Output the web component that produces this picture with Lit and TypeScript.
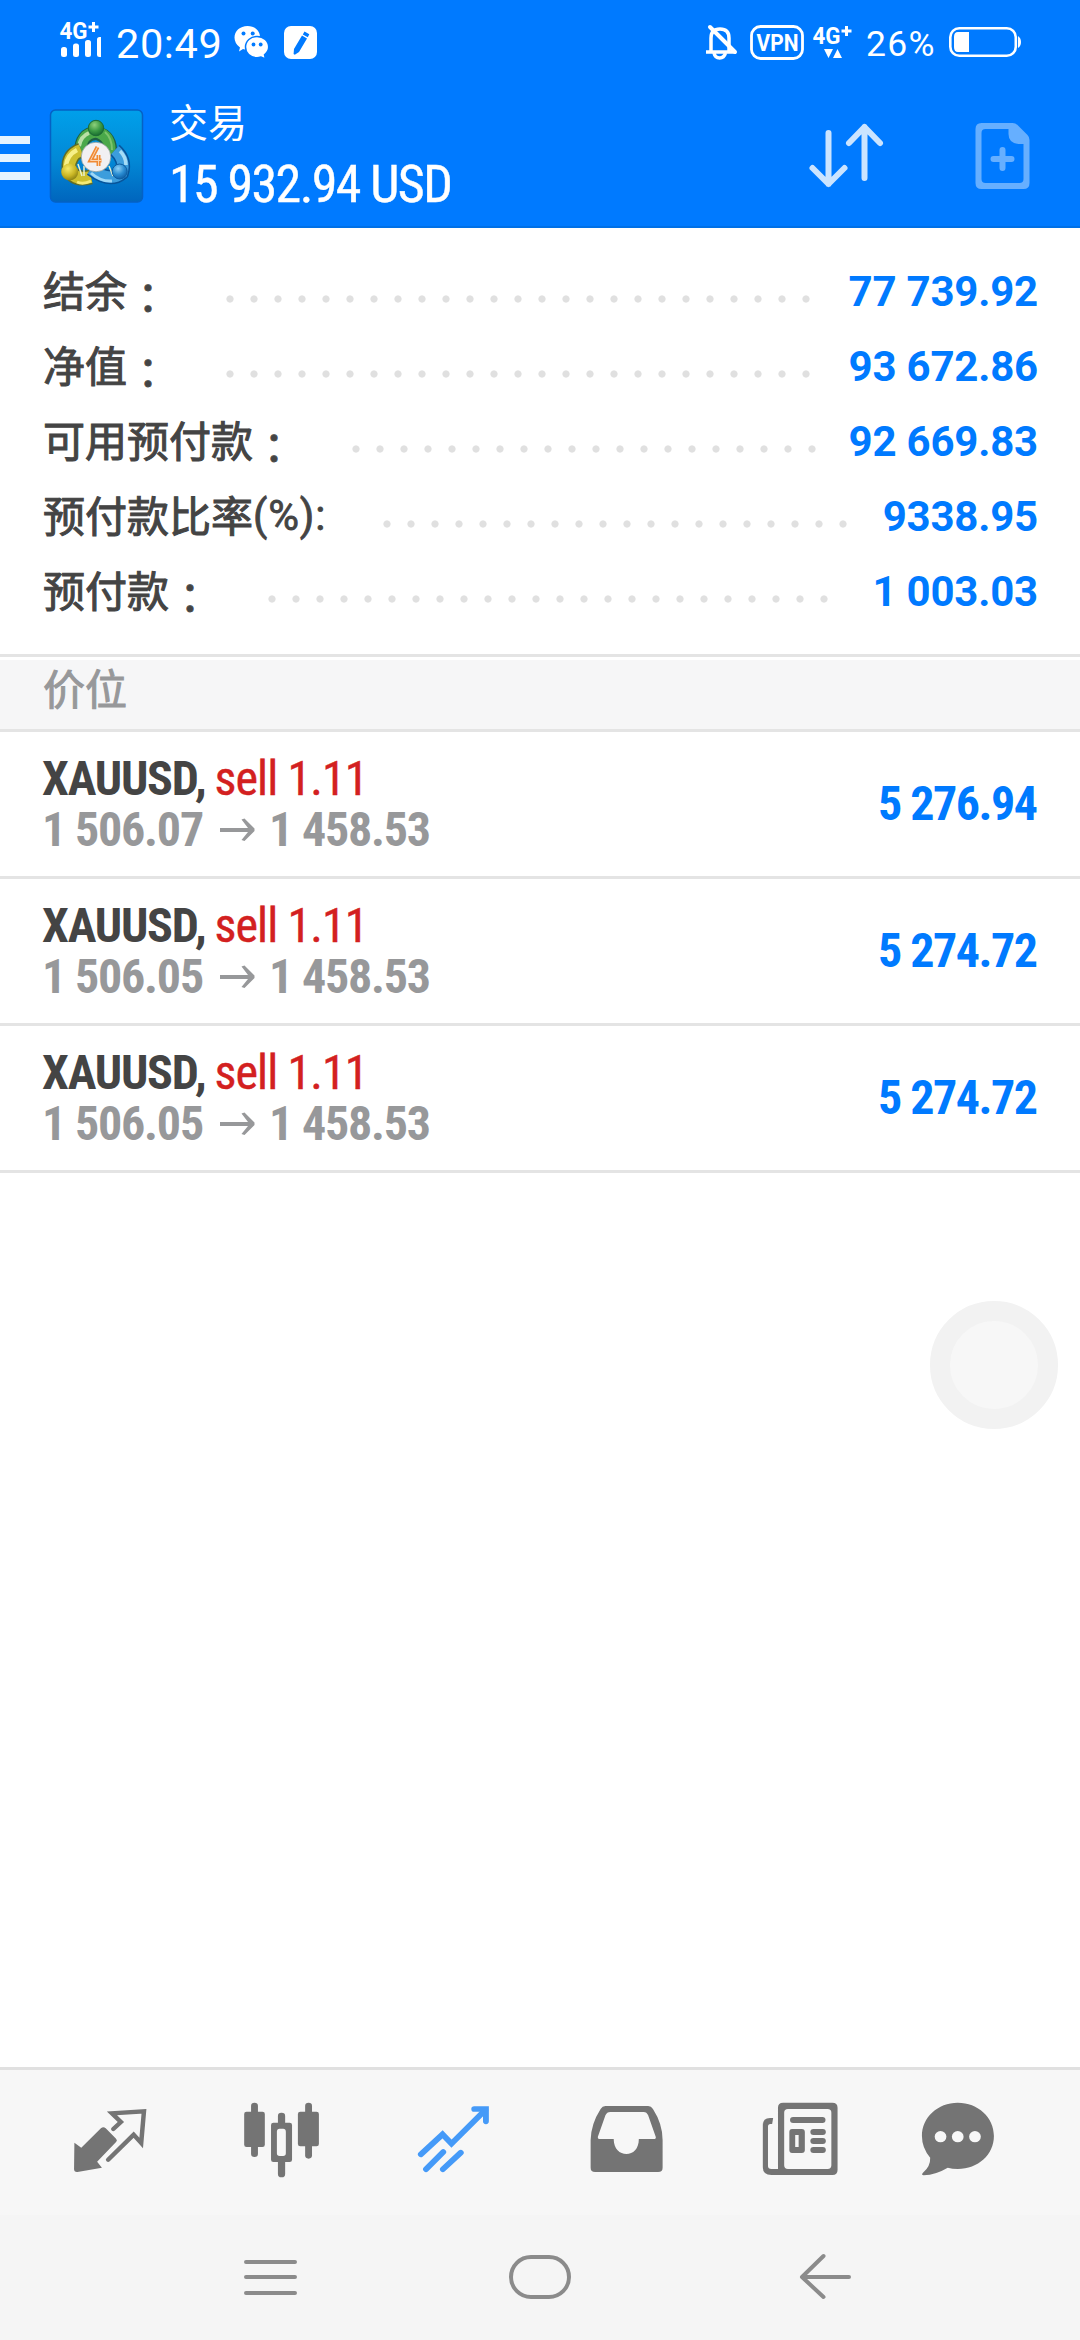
import { LitElement, html, css, svg } from "lit";
import { customElement, property } from "lit/decorators.js";

const summary = [
  { label: "结余", suffix: "：", value: "77 739.92" },
  { label: "净值", suffix: "：", value: "93 672.86" },
  { label: "可用预付款", suffix: "：", value: "92 669.83" },
  { label: "预付款比率", suffix: "(%):", value: "9338.95" },
  { label: "预付款", suffix: "：", value: "1 003.03" },
];

const positions = [
  { symbol: "XAUUSD,", side: "sell 1.11", open: "1 506.07", price: "1 458.53", profit: "5 276.94" },
  { symbol: "XAUUSD,", side: "sell 1.11", open: "1 506.05", price: "1 458.53", profit: "5 274.72" },
  { symbol: "XAUUSD,", side: "sell 1.11", open: "1 506.05", price: "1 458.53", profit: "5 274.72" },
];

// Tab glyphs are drawn on a fine grid; each tab shows its own slice of it.
const tabs = [
  {
    x: 24,
    art: svg`
      <path d="M216 278 L236 293 L293 235 Q300 228 307 235 L337 266 Q342 271 337 276 L282 335 L296 353 L225 366 Q215 367 215 357Z" fill="#747474"/>
      <path d="M329 237 L351 216 L325 190 L418 184 L410 279 L388 254 L314 329" fill="none" stroke="#747474" stroke-width="13" stroke-linecap="round"/>`,
  },
  {
    x: 196,
    art: svg`
      <g fill="#747474">
        <rect x="729" y="158" width="20" height="163" rx="10"/>
        <rect x="709" y="185" width="60" height="106" rx="7"/>
        <rect x="886" y="158" width="20" height="168" rx="10"/>
        <rect x="865" y="185" width="61" height="104" rx="7"/>
        <rect x="807" y="188" width="21" height="40" rx="10"/>
        <rect x="807" y="325" width="21" height="57" rx="10"/>
        <path fill-rule="evenodd" d="M794 218H841Q848 218 848 225V329Q848 336 841 336H794Q787 336 787 329V225Q787 218 794 218ZM812 236Q804 236 804 245V310Q804 318 812 318H822Q830 318 830 310V245Q830 236 822 236Z"/>
      </g>`,
  },
  {
    x: 368,
    art: svg`
      <g fill="none" stroke="#459af8" stroke-linecap="round" stroke-width="17">
        <path d="M1222 313 L1285 253 L1311 281 L1409 180"/>
        <path d="M1377 177 H1411 V214" stroke-linejoin="miter"/>
        <path d="M1237 358 L1287 306 M1286 358 L1338 308"/>
      </g>`,
  },
  {
    x: 540,
    art: svg`
      <path transform="translate(1568 0)" fill="#747474" fill-rule="evenodd" d="M190 168 H314 Q323 168 328 177 Q356 222 356 270 V353 Q356 366 343 366 H160 Q147 366 147 353 V270 Q148 222 176 177 Q181 168 190 168ZM204 186 Q194 186 190 196 L168 260 Q167 267 174 267 H214 C214 297 232 312 251 312 C270 312 287 297 287 267 H330 Q338 267 336 260 L314 196 Q310 186 301 186Z"/>`,
  },
  {
    x: 712,
    art: svg`
      <g transform="translate(1568 0)" fill="#747474">
        <path fill-rule="evenodd" d="M706 158H849Q864 158 864 173V360Q864 375 849 375H672Q647 375 647 352V226Q647 204 668 204H677L674 222H669Q662 222 662 230V348Q662 357 672 357H691V173Q691 158 706 158ZM720 177Q709 177 709 188V346Q709 357 720 357H835Q846 357 846 346V188Q846 177 835 177Z"/>
        <rect x="726" y="201" width="103" height="18" rx="9"/>
        <path fill-rule="evenodd" d="M732 237H760Q769 237 769 246V300Q769 309 760 309H732Q724 309 724 300V246Q724 237 732 237ZM741 255V291H751V255Z"/>
        <rect x="785" y="237" width="45" height="18" rx="9"/>
        <rect x="785" y="264" width="45" height="18" rx="9"/>
        <rect x="785" y="291" width="45" height="18" rx="9"/>
      </g>`,
  },
  {
    x: 884,
    art: svg`
      <g transform="translate(1568 0)">
        <path fill="#747474" d="M1213 158 C1272 158 1318 202 1318 258 C1318 314 1272 357 1213 357 Q1197 357 1184 353 Q1150 374 1114 376 Q1106 374 1112 368 Q1134 349 1133 323 Q1109 294 1109 258 C1109 202 1155 158 1213 158Z"/>
        <g fill="#f8f8f8"><circle cx="1163" cy="260" r="17"/><circle cx="1213" cy="260" r="17"/><circle cx="1263" cy="260" r="17"/></g>
      </g>`,
  },
];

@customElement("status-bar")
class StatusBar extends LitElement {
  static styles = css`
    :host { display: flex; height: 84px; color: #fff; font-family: Roboto, sans-serif; }
    svg { display: block; flex: none; }
    .left, .right { display: flex; }
    .left { padding-left: 58px; }
    .right { margin-left: auto; padding-right: 57px; }
    .time { font-size: 41.5px; line-height: 48px; margin-top: 20px; padding-left: 15px; width: 105px; letter-spacing: 0.6px; white-space: nowrap; }
    .pct { font-size: 35.5px; line-height: 40px; margin-top: 24px; letter-spacing: 1.3px; width: 83px; white-space: nowrap; }
    .net { font: 700 23px Roboto, sans-serif; }
    .vpn { font: 700 23px Roboto, sans-serif; }
  `;
  render() {
    return html`
      <div class="left">
        <svg width="43" height="84" viewBox="58 0 43 84" fill="#fff">
          <text class="net" x="59.5" y="39" textLength="28" lengthAdjust="spacingAndGlyphs">4G</text>
          <path d="M92 22h3v3.500h3.500v3h-3.500v3.500h-3v-3.500h-3.500v-3h3.500z"/>
          <rect x="61" y="47" width="6" height="10" rx="2.500"/><rect x="73" y="43.500" width="6" height="13.500" rx="2.500"/>
          <rect x="85" y="40" width="6" height="17" rx="2.500"/><rect x="97" y="37" width="6" height="20" rx="2.500"/>
        </svg>
        <span class="time">20:49</span>
        <svg width="63" height="84" viewBox="221 0 63 84">
          <path fill="#fff" d="M247.500 26C255 26 260 31 260 37C260 44 255 49.500 247 49.500Q244.500 49.500 243 49L239 51.500L240 47.500Q234.500 43.500 234.500 37.500C234.500 31 240 26 247.500 26Z"/>
          <path fill="#fff" stroke="#007aff" stroke-width="1.500" d="M257 36.500C263.500 36.500 268.700 41 268.700 47Q268.700 51.500 264.500 54.800L265.500 59L261 57Q259 57.700 257 57.700C250 57.700 245.500 53 245.500 47C245.500 41 250.500 36.500 257 36.500Z"/>
          <g fill="#007aff"><circle cx="243.500" cy="33.500" r="2"/><circle cx="252.700" cy="33.500" r="2"/><circle cx="253.500" cy="44.500" r="1.900"/><circle cx="260.700" cy="44.500" r="1.900"/></g>
        </svg>
        <svg width="34" height="84" viewBox="284 0 34 84">
          <rect x="284" y="26" width="33" height="33" rx="7" fill="#fff"/>
          <path fill="#007aff" d="M304.500 31.500l4.800 2.800-1.500 3-5-2.900zM302 35.500l5 2.900-8 13.500-4.200 2.800-1.200-.8.400-5z"/>
        </svg>
      </div>
      <div class="right">
        <svg width="45" height="84" viewBox="704 0 45 84" fill="none" stroke="#fff" stroke-width="3.500">
          <path d="M710 51V38Q710 29 719 29Q728 29 728 38V51M705 52H733"/><path d="M713 53Q714 58 718.700 58Q723 58 724.500 53"/>
          <path d="M709 27L734 52" stroke-width="4" stroke-linecap="round"/>
        </svg>
        <svg width="63" height="84" viewBox="749 0 63 84">
          <rect x="750.500" y="26.500" width="51" height="32" rx="9" fill="none" stroke="#fff" stroke-width="2.800"/>
          <text class="vpn" x="755.500" y="51" fill="#fff" textLength="42" lengthAdjust="spacingAndGlyphs">VPN</text>
        </svg>
        <svg width="53" height="84" viewBox="812 0 53 84" fill="#fff">
          <text class="net" x="811.500" y="43.500" textLength="28" lengthAdjust="spacingAndGlyphs">4G</text>
          <path d="M844 26h3v3.500h3.500v3h-3.500v3.500h-3v-3.500h-3.500v-3h3.500z"/>
          <path d="M823 49h9l-4.500 9zM832 58h9l-4.500-9z"/>
        </svg>
        <span class="pct">26%</span>
        <svg width="74" height="84" viewBox="948 0 74 84">
          <rect x="949.300" y="28.300" width="65.500" height="27.400" rx="9" fill="none" stroke="#fff" stroke-width="2.600"/>
          <path fill="#fff" d="M957 32H968V52H957Q953 52 953 47V37Q953 32 957 32ZM1017 36Q1020 38 1020 42Q1020 46 1017 48Z"/>
        </svg>
      </div>`;
  }
}

@customElement("trade-header")
class TradeHeader extends LitElement {
  static styles = css`
    :host { display: flex; height: 144px; box-sizing: border-box; border-bottom: 2px solid #0070e6; color: #fff; }
    svg { display: block; flex: none; }
    .titles { display: flex; flex-direction: column; padding-left: 25px; flex: 1; }
    .title { font: 400 39px/44px "Noto Sans CJK SC", sans-serif; margin-top: 14px; }
    .sum { font: 400 52px/60px "Roboto Condensed", Roboto, sans-serif; letter-spacing: -1.6px; -webkit-text-stroke: 0.4px #fff; margin-top: 13px; white-space: nowrap; }
  `;
  render() {
    return html`
      <svg width="49" height="142" viewBox="0 84 49 142" fill="#e6f4ff">
        <rect y="136" width="30" height="8"/><rect y="154" width="30" height="8"/><rect y="172" width="30" height="8"/>
      </svg>
      <svg width="95" height="142" viewBox="8 -6 95 142">
        <defs>
          <linearGradient id="bg" x1="0" y1="0" x2="0" y2="1"><stop offset="0" stop-color="#00a0ea"/><stop offset=".55" stop-color="#0288d6"/><stop offset="1" stop-color="#0065bd"/></linearGradient>
          <radialGradient id="g" cx=".4" cy=".3" r=".8"><stop offset="0" stop-color="#8ed07c"/><stop offset=".5" stop-color="#3c9b45"/><stop offset="1" stop-color="#0e5f2a"/></radialGradient>
          <radialGradient id="y" cx=".4" cy=".3" r=".8"><stop offset="0" stop-color="#f6ea67"/><stop offset=".55" stop-color="#c9b524"/><stop offset="1" stop-color="#77700f"/></radialGradient>
          <radialGradient id="b" cx=".4" cy=".3" r=".8"><stop offset="0" stop-color="#8fd0f5"/><stop offset=".5" stop-color="#2a8dd2"/><stop offset="1" stop-color="#07529a"/></radialGradient>
        </defs>
        <rect x="9.500" y="20" width="92" height="92" rx="5" fill="url(#bg)" stroke="#0561c4" stroke-width="1.500"/>
        <g fill="none">
          <path d="M40 62Q40 44 55 43Q71 46 69 66" stroke="#1e5f45" stroke-width="14"/>
          <path d="M40 62Q39 44 55 42Q71 45 69 66" stroke="#4aa84a" stroke-width="11"/>
          <path d="M38 56Q40 46 48 43" stroke="#b8dfa5" stroke-width="4"/>
          <path d="M64 42Q71 48 71 60" stroke="#7cc46c" stroke-width="2"/>
          <path d="M40 60Q27 65 28 79Q33 91 50 87" stroke="#5f6d2a" stroke-width="15"/>
          <path d="M40 60Q27 65 28 79Q33 91 50 87" stroke="#cdbf2e" stroke-width="12"/>
          <path d="M36 60Q26 65 25 76" stroke="#f7f088" stroke-width="4.500"/>
          <path d="M36 92Q42 95 50 91" stroke="#f4ea75" stroke-width="3"/>
          <path d="M74 60Q85 70 81 83Q69 93 50 79" stroke="#07549a" stroke-width="14"/>
          <path d="M74 60Q85 70 81 83Q69 93 50 79" stroke="#3c9ddc" stroke-width="11"/>
          <path d="M79 61Q85 67 85 75" stroke="#a5dcf6" stroke-width="3.500"/>
          <path d="M50 83Q60 92 71 91" stroke="#9fd8f6" stroke-width="3"/>
          <path d="M37 74L41 86M43 76V86M68 76L72 86" stroke="#e9f2d0" stroke-width="1.500"/>
        </g>
        <circle cx="55" cy="38" r="7.700" fill="url(#g)" stroke="#1c6a35"/>
        <circle cx="28.700" cy="82" r="8.500" fill="url(#y)"/>
        <circle cx="78.700" cy="81.500" r="7.500" fill="url(#b)" stroke="#0d5c9f"/>
        <circle cx="55" cy="67" r="14.800" fill="#f1f0f2" stroke="#8a9a95" stroke-width=".7"/>
        <path d="M56.500 57L49.500 70.500H60.500M57.500 65V76" fill="none" stroke="#f08a34" stroke-width="4"/>
        <path d="M56.500 57L49.500 70.500H60.500M57.500 65V76" fill="none" stroke="#fbd3ae" stroke-width="1"/>
      </svg>
      <div class="titles"><span class="title">交易</span><span class="sum">15 932.94 USD</span></div>
      <svg width="276" height="142" viewBox="803.5 84 276 142">
        <path d="M828 133V184M812 168L828 184L844 168M864 178V127M848.500 143L864 127L879.500 143" fill="none" stroke="#cbe4ff" stroke-width="6" stroke-linecap="round" stroke-linejoin="round"/>
        <path fill="#66afff" fill-rule="evenodd" d="M981 123H1012Q1015 123 1017 125L1027 135Q1029 137 1029 140V183Q1029 189 1023 189H981Q975 189 975 183V129Q975 123 981 123ZM985 129Q981 129 981 133V179Q981 183 985 183H1019Q1023 183 1023 179V144H1018Q1008 143 1008 134V129Z"/>
        <path d="M1002 150V168M993 159H1011" stroke="#66afff" stroke-width="6" stroke-linecap="round"/>
      </svg>`;
  }
}

@customElement("position-row")
class PositionRow extends LitElement {
  @property({ attribute: false }) item: any;
  static styles = css`
    :host { display: flex; align-items: center; height: 147px; box-sizing: border-box; padding: 0 43.5px 2px 42px; border-bottom: 3px solid #e4e4e4;
      font: 700 48px/51px "Roboto Condensed", Roboto, sans-serif; letter-spacing: -1.2px; white-space: nowrap; }
    .info { flex: 1; display: flex; flex-direction: column; padding-top: 1px; }
    .symbol { color: #444; display: flex; gap: 9px; }
    .side { color: #d32020; font-weight: 400; letter-spacing: -0.9px; -webkit-text-stroke: 0.4px #d32020; }
    .prices { color: #97989a; display: flex; align-items: center; }
    .arrow { display: block; margin: 2px 14px 0 17px; }
    .profit { color: #007aff; letter-spacing: -1.5px; }
  `;
  render() {
    const p = this.item;
    return html`
      <div class="info">
        <div class="symbol"><span>${p.symbol}</span><span class="side">${p.side}</span></div>
        <div class="prices"><span>${p.open}</span>
          <svg class="arrow" width="35" height="24" viewBox="0 0 35 24"><path d="M0 10H28L21.500 1.500L24.500 .5L34.500 10.500V13L24.500 23L21.500 22L28 14H0Z" fill="#97989a"/></svg>
          <span>${p.price}</span></div>
      </div>
      <span class="profit">${p.profit}</span>`;
  }
}

@customElement("app-root")
class AppRoot extends LitElement {
  static styles = css`
    :host { display: flex; flex-direction: column; width: 1080px; height: 2340px; background: #fff; overflow: hidden; position: relative; }
    .top { background: #007aff; }
    .summary { display: flex; flex-direction: column; height: 426px; box-sizing: border-box; padding: 26px 42px 0 43px; }
    .line { display: flex; align-items: center; height: 75px; }
    .label { display: flex; height: 60px; margin-bottom: 6px; font: 400 42px/60px "Noto Sans CJK SC", sans-serif; color: #444; -webkit-text-stroke: 1px #444; white-space: nowrap; }
    .suffix { font-family: Roboto, "Noto Sans CJK TC", sans-serif; margin-top: 2px; letter-spacing: 0.8px; -webkit-text-stroke-width: 0.8px; }
    .colon { font-family: "Noto Sans CJK TC", sans-serif; margin-top: 7px; letter-spacing: 0; }
    .dots { flex: 1; height: 8px; margin: 15px 30px 0 49px; background: radial-gradient(circle, #e0e0e0 3.2px, transparent 4px) left center / 24px 8px repeat-x; }
    .value { font: 700 42px/60px Roboto, sans-serif; letter-spacing: -0.2px; color: #007aff; white-space: nowrap; }
    .section { height: 78px; box-sizing: border-box; border-top: 3px solid #e4e4e4; border-bottom: 3px solid #e4e4e4; box-shadow: inset 0 3px #fff; background: #f6f6f7; padding-left: 43px; font: 400 42px/60px "Noto Sans CJK SC", sans-serif; color: #97989a; -webkit-text-stroke: 1px #97989a; }
    .space { flex: 1; }
    .float { position: absolute; left: 930px; top: 1301px; width: 128px; height: 128px; box-sizing: border-box; border: 20px solid #f2f2f2; border-radius: 50%; background: #f7f7f7; }
    .tabs { display: flex; height: 148px; box-sizing: border-box; border-top: 3px solid #e0e0e0; padding: 0 24px; background: #f7f7f7; }
    .tabs svg { display: block; }
    .nav { height: 125px; background: #f5f5f5; display: flex; justify-content: center; }
  `;
  render() {
    return html`
      <div class="top"><status-bar></status-bar><trade-header></trade-header></div>
      <div class="summary">
        ${summary.map((s) => html`<div class="line"><span class="label">${s.label}<span class="suffix ${s.suffix === "：" ? "colon" : ""}" lang="zh-TW">${s.suffix}</span></span><span class="dots"></span><span class="value">${s.value}</span></div>`)}
      </div>
      <div class="section">价位</div>
      ${positions.map((p) => html`<position-row .item=${p}></position-row>`)}
      <div class="space"></div>
      <div class="tabs">
        ${tabs.map((t) => html`<svg width="172" height="145" viewBox="${t.x} 20 172 145"><g transform="scale(.34439 .33333)">${t.art}</g></svg>`)}
      </div>
      <div class="nav">
        <svg width="1080" height="125" viewBox="0 165 1080 125" fill="none" stroke="#8b8b8b" stroke-width="4" stroke-linecap="round">
          <path d="M246 212H295M246 227H295M246 243H295"/>
          <rect x="511" y="207" width="58" height="40" rx="20"/>
          <path d="M849 227H803M823.500 206L802 227L823.500 247" stroke-linejoin="round"/>
        </svg>
      </div>
      <div class="float"></div>`;
  }
}
